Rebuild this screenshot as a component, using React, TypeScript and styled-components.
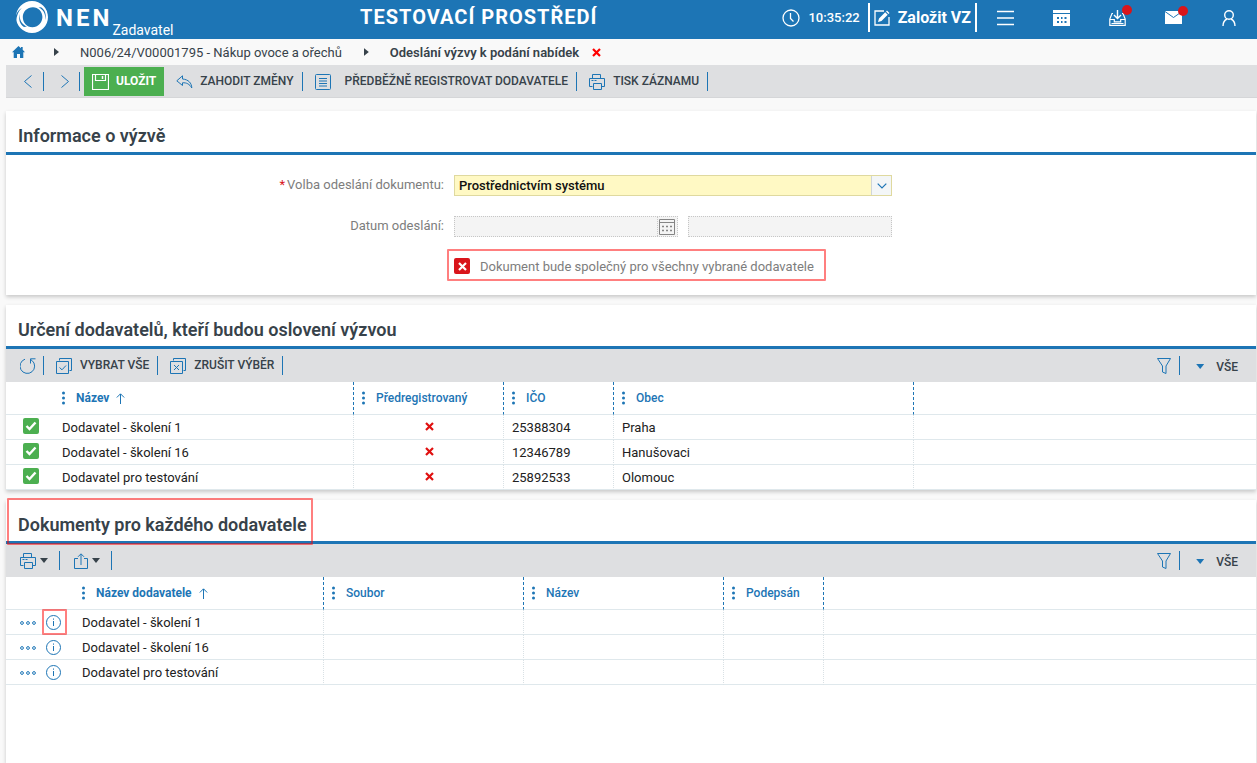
import React from "react";
import styled, { createGlobalStyle, css } from "styled-components";

const c = {
  blue: "#1d75b5",
  dark: "#37424a",
  grey: "#7d7d7d",
  bar: "#dedfe1",
  page: "#f9f9f9",
  line: "#dfe8ec",
  green: "#4caf50",
  red: "#d9151b",
};

const GlobalStyle = createGlobalStyle`
  *, *::before, *::after { box-sizing: border-box; }
  html { background: ${c.page}; }
  body { margin: 0; font-family: Roboto, "Liberation Sans", sans-serif; font-size: 13px; color: #212121; }
  button, input, select { font: inherit; color: inherit; margin: 0; }
  button { border: 0; padding: 0; background: none; cursor: pointer; }
  svg { display: block; flex: none; }
`;

const Page = styled.div`
  display: flex;
  flex-direction: column;
  min-height: 100vh;
`;

/* Header */
const Header = styled.header`
  display: flex;
  height: 39px;
  background: ${c.blue};
  color: #fff;
`;
const Brand = styled.a`
  display: flex;
  width: 175px;
  padding-left: 16px;
  color: inherit;
  text-decoration: none;
`;
const BrandName = styled.span`
  margin-left: 8px;
  font-size: 24px;
  font-weight: 700;
  line-height: 36px;
  letter-spacing: 3px;
`;
const BrandRole = styled.span`
  align-self: flex-end;
  font-size: 14px;
  line-height: 18px;
`;
const EnvTitle = styled.strong`
  flex: 1;
  text-align: center;
  font-size: 20px;
  line-height: 35px;
  letter-spacing: 1px;
`;
const Clock = styled.div`
  display: flex;
  align-items: center;
  gap: 8px;
  height: 35px;
  padding-right: 8px;
  font-weight: 500;
`;
const CreateButton = styled.button`
  display: flex;
  align-items: center;
  gap: 8px;
  height: 29px;
  margin-top: 3px;
  padding: 0 4px;
  border: solid #fff;
  border-width: 0 2px;
  font-size: 16px;
  font-weight: 700;
`;
const HeaderIcon = styled.button`
  display: grid;
  place-items: center;
  width: 56px;
  height: 35px;
`;
const IconHolder = styled.span`
  position: relative;
`;
const Badge = styled.span`
  position: absolute;
  top: -5px;
  right: -6px;
  width: 10px;
  height: 10px;
  border-radius: 50%;
  background: ${c.red};
`;

/* Breadcrumb */
const Breadcrumb = styled.nav`
  display: flex;
  align-items: center;
  height: 26px;
  padding-left: 12px;
  color: ${c.dark};
`;
const Crumb = styled.a<{ $current?: boolean }>`
  color: inherit;
  text-decoration: none;
  font-weight: ${(p) => (p.$current ? 600 : 400)};
`;
const CrumbArrow = styled.span`
  width: 5px;
  height: 8px;
  margin: 0 21px 0 22px;
  background: ${c.dark};
  clip-path: polygon(0 0, 100% 50%, 0 100%);
`;
const HomeLink = styled.a`
  margin-right: 7px;
`;
const CloseButton = styled.button`
  margin-left: 13px;
`;

/* Toolbars */
const Toolbar = styled.div<{ $main?: boolean }>`
  display: flex;
  align-items: center;
  height: 33px;
  background: ${c.bar};
  ${(p) =>
    p.$main &&
    css`
      margin: 0 0 13px 6px;
      box-shadow: inset 0 -1px #d5d6d8;
    `}
`;
const Separator = styled.span`
  width: 1px;
  height: 19px;
  background: ${c.blue};
`;
const NavButton = styled.button<{ $width: number }>`
  display: grid;
  place-items: center;
  width: ${(p) => p.$width}px;
  height: 32px;
  padding-left: 6px;
`;
const ToolButton = styled.button<{ $gap?: number }>`
  display: flex;
  align-items: center;
  gap: ${(p) => p.$gap ?? 8}px;
  height: 33px;
  padding: 0 8px 0 12px;
  color: ${c.dark};
  font-size: 12px;
  font-weight: 500;
  white-space: nowrap;
`;
const SaveButton = styled(ToolButton)`
  height: 29px;
  margin-left: 4px;
  padding: 0 8px;
  background: ${c.green};
  color: #fff;
  font-weight: 700;
`;
const ToolText = styled.span`
  padding-bottom: 2px;
`;
const MenuButton = styled.button`
  display: flex;
  align-items: center;
  gap: 4px;
  height: 32px;
  padding: 0 11px 0 14px;
`;
const Caret = styled.span<{ $color?: string }>`
  width: 8px;
  height: 5px;
  background: ${(p) => p.$color ?? c.dark};
  clip-path: polygon(0 0, 100% 0, 50% 100%);
`;
const Spacer = styled.span`
  flex: 1;
`;
const FilterButton = styled.button`
  padding-right: 8px;
`;
const ViewButton = styled.button`
  display: flex;
  align-items: center;
  gap: 12px;
  padding: 2px 18px 0 16px;
  color: ${c.dark};
  font-size: 12px;
  font-weight: 500;
`;

/* Sections */
const Section = styled.section<{ $fill?: boolean }>`
  margin: 0 1px 10px 6px;
  background: #fff;
  box-shadow: 0 2px 4px rgba(0, 0, 0, 0.2);
  ${(p) =>
    p.$fill &&
    css`
      flex: 1;
      margin-bottom: 0;
    `}
`;
const SectionHead = styled.div`
  position: relative;
  height: 44px;
  padding: 7px 12px 0;
  border-bottom: 3px solid ${c.blue};
`;
const SectionTitle = styled.h2`
  margin: 0;
  color: ${c.dark};
  font-size: 18px;
  font-weight: 600;
  line-height: 36px;
`;
const mark = css`
  border: 2px solid rgba(255, 0, 0, 0.5);
  border-radius: 1px;
`;
const TitleMark = styled.span`
  ${mark}
  position: absolute;
  top: -2px;
  left: 1px;
  width: 306px;
  height: 47px;
`;

/* Form */
const Form = styled.form`
  display: grid;
  grid-template-columns: 438px minmax(200px, 438px);
  column-gap: 10px;
  row-gap: 20px;
  padding: 20px 0 14px;
`;
const FieldLabel = styled.label`
  color: ${c.grey};
  line-height: 20px;
  text-align: right;
`;
const Required = styled.span`
  margin-right: 2px;
  color: ${c.red};
`;
const SelectBox = styled.div`
  display: grid;
  grid-template-columns: 1fr 20px;
  height: 21px;
  border: 1px solid #dfd99f;
  background: #fff9c4;
`;
const Select = styled.select`
  grid-area: 1 / 1 / 2 / 3;
  appearance: none;
  border: 0;
  padding: 0 4px;
  background: transparent;
  color: #111;
  font-weight: 500;
`;
const SelectArrow = styled.span`
  grid-area: 1 / 2;
  display: grid;
  place-items: center;
  border-left: 1px solid #cfd5d8;
  background: #f3f6f7;
  pointer-events: none;
`;
const DateFields = styled.div`
  display: grid;
  grid-template-columns: 224fr 204fr;
  gap: 10px;
`;
const field = css`
  height: 21px;
  border: 1px dotted #c6c6c6;
  background: #f4f4f4;
`;
const DateBox = styled.div`
  ${field}
  display: flex;
`;
const DateInput = styled.input`
  flex: 1;
  min-width: 0;
  border: 0;
  padding: 0 4px;
  background: transparent;
`;
const DateButton = styled.button`
  width: 20px;
  padding-left: 1px;
  border-left: 1px dotted #c6c6c6;
`;
const TimeInput = styled.input`
  ${field}
  min-width: 0;
  padding: 0 4px;
`;
const SharedOption = styled.label`
  ${mark}
  grid-column: 2;
  justify-self: start;
  display: flex;
  align-items: center;
  gap: 10px;
  height: 32px;
  margin: -8px 0 0 -7px;
  padding: 2px 10px 0 5px;
  color: ${c.grey};
  white-space: nowrap;
`;
const CheckHolder = styled.span`
  display: inline-grid;
  place-items: center;
  vertical-align: top;
  svg { grid-area: 1 / 1; pointer-events: none; }
`;
const CheckInput = styled.input<{ $color: string }>`
  grid-area: 1 / 1;
  appearance: none;
  width: 16px;
  height: 16px;
  border-radius: 2px;
  background: ${(p) => p.$color};
`;

/* Tables */
const Table = styled.table`
  width: 100%;
  table-layout: fixed;
  border-spacing: 0;
`;
const Th = styled.th<{ $sorted?: boolean; $edge?: boolean }>`
  height: 33px;
  padding: 0 8px;
  border-bottom: 1px solid ${c.line};
  ${(p) => p.$edge && css`border-right: 1px dashed ${c.blue};`}
  color: ${c.blue};
  font-size: 12px;
  font-weight: ${(p) => (p.$sorted ? 700 : 500)};
  text-align: left;
`;
const ThContent = styled.div`
  display: flex;
  align-items: center;
  white-space: nowrap;
`;
const ThText = styled.span`
  margin: 0 7px 0 10px;
`;
const Td = styled.td<{ $edge?: boolean }>`
  height: 25px;
  padding: 2px 8px 0;
  border-bottom: 1px solid ${c.line};
  ${(p) => p.$edge && css`border-right: 1px dotted #d9e1e5;`}
  line-height: 22px;
  white-space: nowrap;
`;
const CheckCell = styled(Td)`
  padding: 3px 0 0 17px;
  line-height: 16px;
  vertical-align: top;
`;
const StateCell = styled(Td)`
  padding: 0 8px 2px 10px;
  svg { margin: 0 auto; }
`;
const RowActions = styled.div`
  display: flex;
  align-items: center;
  gap: 10px;
  padding-left: 6px;
`;
const InfoHolder = styled.span`
  position: relative;
  display: flex;
`;
const InfoMark = styled.span`
  ${mark}
  position: absolute;
  top: -6px;
  left: -4px;
  width: 25px;
  height: 26px;
  pointer-events: none;
`;

/* Icons */
type IconProps = { w?: number; h?: number; color?: string; box?: string; children: React.ReactNode };
const Icon = ({ w = 16, h = 16, color = c.blue, box, children }: IconProps) => (
  <svg width={w} height={h} viewBox={box ?? `0 0 ${w} ${h}`} fill="none" stroke={color} aria-hidden="true">
    {children}
  </svg>
);
const Logo = () => (
  <Icon w={32} h={34} color="none">
    <path fill="#fff" fillRule="evenodd" d="M16 1a16 16 0 1 1 0 32a16 16 0 1 1 0-32zM17 7.200c-5.800 0-10.200 4.300-10.200 9.700c0 5.800 4 10.300 9.600 10.300c5.500 0 10-4.500 10-10.300c0-5.400-4.200-9.700-9.400-9.700z" />
    <path fill={c.blue} d="M22.500 7.500C27.500 9.500 30 14 29 20C31 14.500 28.800 9.500 25 7.200ZM30 7l2 4.500V17C32 13 31.500 10 29 6.500Z" />
    <path fill={c.blue} d="M11 26.500C6 24.500 3 20 4 14C2 19.500 4.200 24.800 8 27ZM0 22.500V15C1.200 11.500 3.300 9.500 5.800 8C2.500 11 .6 15.500 0 22.500Z" />
  </Icon>
);
const ClockIcon = () => (
  <Icon w={18} h={18} color="#fff"><circle cx="9" cy="9" r="8" strokeWidth="1.300" /><path d="M8.500 4v5.500l3 3" strokeWidth="1.300" /></Icon>
);
const EditIcon = () => (
  <Icon color="#fff"><path d="M10 1H1v14h14V7" strokeWidth="1.300" /><path fill="#fff" stroke="none" d="M4 12l1-3.500 6.200-6.200 2.500 2.500L7.500 11zM12 1.500l1-1 2.500 2.500-1 1z" /></Icon>
);
const MenuIcon = () => (
  <Icon w={17} color="#fff"><path d="M0 1.500h17M0 8h17M0 14.500h17" strokeWidth="1.600" /></Icon>
);
const HeaderCalendar = () => (
  <Icon w={17} color="none">
    <path fill="#fff" d="M0 0h17v3H0zM0 4h17v12H0z" />
    <path fill={c.blue} d="M4 7h2v2H4zM8 7h1.500v2H8zM11.500 7h2v2h-2zM4 11h2v2H4zM8 11h1.500v2H8zM11.500 11h2v2h-2z" />
  </Icon>
);
const InboxIcon = () => (
  <Icon w={17} color="#fff">
    <path d="M4 3.500H3L.8 9v6.300h15.400V9L14 3.500h-1M.8 9.500h4.500v2.300h6.400V9.500h4.500M2.500 13.500h12" strokeWidth="1.200" />
    <path d="M8.500 0v8M5 5l3.500 3.500L12 5" strokeWidth="1.400" />
  </Icon>
);
const MailIcon = () => (
  <Icon w={17} h={13} color={c.blue}><path fill="#fff" stroke="none" d="M0 0h17v13H0z" /><path d="M0 .5l8.500 6 8.500-6" /></Icon>
);
const UserIcon = () => (
  <Icon w={14} color="#fff"><circle cx="7" cy="5" r="4.300" strokeWidth="1.400" /><path d="M1 16c0-4 1.800-6 4-7M13 16c0-4-1.800-6-4-7" strokeWidth="1.400" /></Icon>
);
const HomeIcon = () => (
  <Icon w={13} h={12} color="none"><path fill={c.blue} d="M6.500 0l2.500 2.200V1h1.700v2.800L13 6.200h-1.700V12H8V8H5v4H1.700V6.200H0z" /></Icon>
);
const CrossIcon = ({ color = "#e01010", size = 9 }) => (
  <Icon w={size} h={size} color={color} box="0 0 9 9"><path d="M1 1l7 7M8 1L1 8" strokeWidth="2.200" /></Icon>
);
const Chevron = ({ next }: { next?: boolean }) => (
  <Icon w={8} h={13}><path d={next ? "M.5.5l7 6-7 6" : "M7.500.5l-7 6 7 6"} /></Icon>
);
const SaveIcon = () => (
  <Icon w={17} color="#fff"><path d="M.5.5h16v15H.5zM3.500.5v6h10v-6" strokeWidth="1.200" /><path d="M10.500 2v3" strokeWidth="1.500" /></Icon>
);
const UndoIcon = () => (
  <Icon w={17} h={14}><path d="M6.500.8L.8 5.800l5.700 4.700V7.800c4-.3 7 1.200 9.300 5.200-.2-5-3.300-8.500-9.300-9z" /></Icon>
);
const ListIcon = () => (
  <Icon><rect x=".5" y=".5" width="15" height="15" rx="1" /><path d="M4 4.500h8M4 7h8M4 9.500h8M4 12h8" /></Icon>
);
const PrinterIcon = () => (
  <Icon><path d="M3.500 4.500v-4h8v4M3.500 12.500h-3v-8h15v8h-3M4.500 9.500h8v6h-8z" /><path d="M2.500 6.500h2M5.500 6.500h2" /></Icon>
);
const RefreshIcon = () => (
  <Icon><path d="M5 1.200A7.300 7.300 0 1 0 12 2.500L10.500 1.500M15.500.8h-5v4.700" /></Icon>
);
const SelectAllIcon = ({ clear }: { clear?: boolean }) => (
  <Icon><path d="M3.500 2.500v-2h12v12h-2M.5 3.500h12v12H.5z" /><path d={clear ? "M4 7l5 5M9 7l-5 5" : "M3.500 9.500l2.500 2.300L10 7.500"} /></Icon>
);
const FilterIcon = () => (
  <Icon w={14}><path d="M.5.5h13L9 8v7.500L5.500 14V8z" /></Icon>
);
const ShareIcon = () => (
  <Icon w={14}><path d="M4 5.500H.5v10h13v-10H10M7 12V1M4 3.800L7 .8l3 3" /></Icon>
);
const DotsIcon = () => (
  <Icon w={4} h={14} color="none"><g fill={c.blue}><circle cx="1.500" cy="2" r="1.500" /><circle cx="1.500" cy="7" r="1.500" /><circle cx="1.500" cy="12" r="1.500" /></g></Icon>
);
const SortIcon = () => (
  <Icon w={9} h={11}><path d="M4.500 11V1M.8 4.500l3.700-3.700 3.700 3.700" /></Icon>
);
const MoreIcon = () => (
  <Icon w={16} h={4}><circle cx="2" cy="2" r="1.400" /><circle cx="8" cy="2" r="1.400" /><circle cx="14" cy="2" r="1.400" /></Icon>
);
const InfoIcon = () => (
  <Icon><circle cx="7.500" cy="7.500" r="7" /><path d="M7.500 6v5M7.500 3.500v1.200" /></Icon>
);
const FieldCalendar = () => (
  <Icon color="#858585"><path d="M.5.5h15v15H.5zM.5 3.500h15" /><path d="M3 7.500h2M7 7.500h2M11 7.500h2M3 11.500h2M7 11.500h2M11 11.500h2" strokeWidth="1.500" /></Icon>
);
const TickIcon = () => (
  <Icon color="#fff"><path d="M3.500 8l3 3 6-6.500" strokeWidth="2.400" /></Icon>
);

type Column = { title: string; width: number; sorted?: boolean };

const HeadRow = ({ lead, columns }: { lead: number; columns: Column[] }) => (
  <>
    <colgroup>
      <col style={{ width: lead }} />
      {columns.map((col) => <col key={col.title} style={{ width: col.width }} />)}
      <col />
    </colgroup>
    <thead>
      <tr>
        <Th />
        {columns.map((col) => (
          <Th key={col.title} $edge $sorted={col.sorted} scope="col">
            <ThContent><DotsIcon /><ThText>{col.title}</ThText>{col.sorted && <SortIcon />}</ThContent>
          </Th>
        ))}
        <Th />
      </tr>
    </thead>
  </>
);

const ViewTools = () => (
  <>
    <Spacer />
    <FilterButton aria-label="Filtr"><FilterIcon /></FilterButton>
    <Separator />
    <ViewButton><Caret $color={c.blue} />VŠE</ViewButton>
  </>
);

const suppliers = [
  { name: "Dodavatel - školení 1", ico: "25388304", city: "Praha" },
  { name: "Dodavatel - školení 16", ico: "12346789", city: "Hanušovaci" },
  { name: "Dodavatel pro testování", ico: "25892533", city: "Olomouc" },
];
const supplierColumns: Column[] = [
  { title: "Název", width: 300, sorted: true },
  { title: "Předregistrovaný", width: 150 },
  { title: "IČO", width: 110 },
  { title: "Obec", width: 300 },
];
const documentColumns: Column[] = [
  { title: "Název dodavatele", width: 250, sorted: true },
  { title: "Soubor", width: 200 },
  { title: "Název", width: 200 },
  { title: "Podepsán", width: 100 },
];

export default function App() {
  return (
    <Page>
      <GlobalStyle />
      <Header>
        <Brand href="#"><Logo /><BrandName>NEN</BrandName><BrandRole>Zadavatel</BrandRole></Brand>
        <EnvTitle>TESTOVACÍ PROSTŘEDÍ</EnvTitle>
        <Clock><ClockIcon />10:35:22</Clock>
        <CreateButton><EditIcon />Založit VZ</CreateButton>
        <HeaderIcon aria-label="Menu"><MenuIcon /></HeaderIcon>
        <HeaderIcon aria-label="Kalendář"><HeaderCalendar /></HeaderIcon>
        <HeaderIcon aria-label="Doručené"><IconHolder><InboxIcon /><Badge /></IconHolder></HeaderIcon>
        <HeaderIcon aria-label="Zprávy"><IconHolder><MailIcon /><Badge /></IconHolder></HeaderIcon>
        <HeaderIcon aria-label="Uživatel"><UserIcon /></HeaderIcon>
      </Header>

      <Breadcrumb>
        <HomeLink href="#" aria-label="Domů"><HomeIcon /></HomeLink>
        <CrumbArrow />
        <Crumb href="#">N006/24/V00001795 - Nákup ovoce a ořechů</Crumb>
        <CrumbArrow />
        <Crumb href="#" $current>Odeslání výzvy k podání nabídek</Crumb>
        <CloseButton aria-label="Zavřít"><CrossIcon color="#f00" /></CloseButton>
      </Breadcrumb>

      <Toolbar $main>
        <NavButton $width={37} aria-label="Předchozí"><Chevron /></NavButton>
        <Separator />
        <NavButton $width={35} aria-label="Další"><Chevron next /></NavButton>
        <Separator />
        <SaveButton $gap={7}><SaveIcon /><ToolText>ULOŽIT</ToolText></SaveButton>
        <ToolButton $gap={7}><UndoIcon /><ToolText>ZAHODIT ZMĚNY</ToolText></ToolButton>
        <Separator />
        <ToolButton $gap={14}><ListIcon /><ToolText>PŘEDBĚŽNĚ REGISTROVAT DODAVATELE</ToolText></ToolButton>
        <Separator />
        <ToolButton><PrinterIcon /><ToolText>TISK ZÁZNAMU</ToolText></ToolButton>
        <Separator />
      </Toolbar>

      <Section>
        <SectionHead><SectionTitle>Informace o výzvě</SectionTitle></SectionHead>
        <Form>
          <FieldLabel htmlFor="method"><Required>*</Required>Volba odeslání dokumentu:</FieldLabel>
          <SelectBox>
            <Select id="method"><option>Prostřednictvím systému</option></Select>
            <SelectArrow><Icon w={10} h={6}><path d="M.7.7L5 5 9.300.7" strokeWidth="1.200" /></Icon></SelectArrow>
          </SelectBox>
          <FieldLabel htmlFor="date">Datum odeslání:</FieldLabel>
          <DateFields>
            <DateBox>
              <DateInput id="date" disabled />
              <DateButton type="button" aria-label="Vybrat datum"><FieldCalendar /></DateButton>
            </DateBox>
            <TimeInput aria-label="Čas odeslání" disabled />
          </DateFields>
          <SharedOption>
            <CheckHolder><CheckInput type="checkbox" $color={c.red} /><CrossIcon color="#fff" /></CheckHolder>
            Dokument bude společný pro všechny vybrané dodavatele
          </SharedOption>
        </Form>
      </Section>

      <Section>
        <SectionHead><SectionTitle>Určení dodavatelů, kteří budou oslovení výzvou</SectionTitle></SectionHead>
        <Toolbar>
          <NavButton $width={37} aria-label="Obnovit"><RefreshIcon /></NavButton>
          <Separator />
          <ToolButton><SelectAllIcon /><ToolText>VYBRAT VŠE</ToolText></ToolButton>
          <Separator />
          <ToolButton><SelectAllIcon clear /><ToolText>ZRUŠIT VÝBĚR</ToolText></ToolButton>
          <Separator />
          <ViewTools />
        </Toolbar>
        <Table>
          <HeadRow lead={48} columns={supplierColumns} />
          <tbody>
            {suppliers.map((s) => (
              <tr key={s.ico}>
                <CheckCell>
                  <CheckHolder>
                    <CheckInput type="checkbox" defaultChecked $color={c.green} aria-label={s.name} />
                    <TickIcon />
                  </CheckHolder>
                </CheckCell>
                <Td $edge>{s.name}</Td>
                <StateCell $edge><CrossIcon /></StateCell>
                <Td $edge>{s.ico}</Td>
                <Td $edge>{s.city}</Td>
                <Td />
              </tr>
            ))}
          </tbody>
        </Table>
      </Section>

      <Section $fill>
        <SectionHead>
          <SectionTitle>Dokumenty pro každého dodavatele</SectionTitle>
          <TitleMark />
        </SectionHead>
        <Toolbar>
          <MenuButton aria-label="Tisk"><PrinterIcon /><Caret /></MenuButton>
          <Separator />
          <MenuButton aria-label="Export"><ShareIcon /><Caret /></MenuButton>
          <Separator />
          <ViewTools />
        </Toolbar>
        <Table>
          <HeadRow lead={68} columns={documentColumns} />
          <tbody>
            {suppliers.map((s, i) => (
              <tr key={s.ico}>
                <Td>
                  <RowActions>
                    <button aria-label="Další akce"><MoreIcon /></button>
                    <InfoHolder>
                      <button aria-label="Detail"><InfoIcon /></button>
                      {i === 0 && <InfoMark />}
                    </InfoHolder>
                  </RowActions>
                </Td>
                <Td $edge>{s.name}</Td>
                <Td $edge />
                <Td $edge />
                <Td $edge />
                <Td />
              </tr>
            ))}
          </tbody>
        </Table>
      </Section>
    </Page>
  );
}
